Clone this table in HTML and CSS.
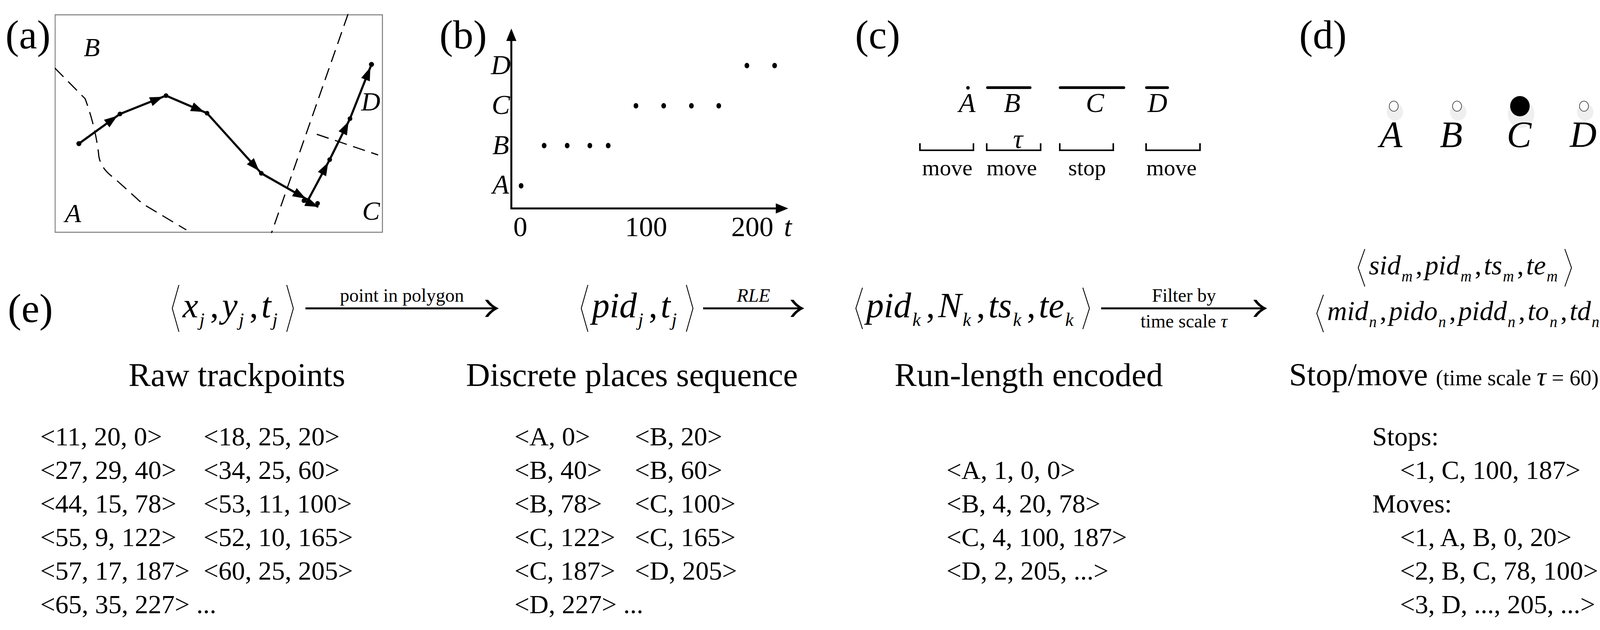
FILE: index.html
```html
<!DOCTYPE html>
<html>
<head>
<meta charset="utf-8">
<title>Trajectory processing figure</title>
<link rel="stylesheet" href="styles.css">
</head>
<body>
<div class="top">
  <div class="panel panel-a">
    <div class="plabel">(a)</div>
    <svg class="fig" width="860" height="640" viewBox="140 0 860 640">
      <defs>
        <marker id="ha" viewBox="0 0 34 24" markerWidth="34" markerHeight="24" refX="42" refY="12" orient="auto" markerUnits="userSpaceOnUse"><path d="M0,0 L34,12 L0,24 Z"/></marker>
        <marker id="hb" viewBox="0 0 34 24" markerWidth="34" markerHeight="24" refX="34" refY="12" orient="auto" markerUnits="userSpaceOnUse"><path d="M0,0 L34,12 L0,24 Z"/></marker>
      </defs>
      <rect class="frame" x="141" y="38" width="838" height="557"/>
      <path class="dash" d="M140,174 L218,253 Q246,330 253,400 Q258,432 292,456 L365,522 L477,589"/>
      <path class="dash" d="M891,36 L695,597"/>
      <path class="dash" d="M811,344 L968,397"/>
      <g class="traj">
        <line x1="202" y1="368" x2="307" y2="292" marker-end="url(#ha)"/>
        <line x1="307" y1="292" x2="425" y2="245" marker-end="url(#ha)"/>
        <line x1="425" y1="245" x2="530" y2="290" marker-end="url(#ha)"/>
        <line x1="530" y1="290" x2="669" y2="444" marker-end="url(#ha)"/>
        <line x1="669" y1="444" x2="790" y2="513" marker-end="url(#ha)"/>
        <line x1="778" y1="514" x2="815" y2="530" marker-end="url(#hb)"/>
        <line x1="790" y1="510" x2="844" y2="409" marker-end="url(#ha)"/>
        <line x1="844" y1="409" x2="896" y2="304" marker-end="url(#ha)"/>
        <line x1="896" y1="304" x2="951" y2="165" marker-end="url(#ha)"/>
      </g>
      <g class="dots">
        <circle cx="202" cy="368" r="6.5"/>
        <circle cx="307" cy="292" r="6"/>
        <circle cx="425" cy="245" r="6"/>
        <circle cx="530" cy="290" r="6"/>
        <circle cx="669" cy="444" r="6"/>
        <circle cx="778" cy="514" r="6"/>
        <circle cx="813" cy="521" r="6"/>
        <circle cx="844" cy="409" r="6"/>
        <circle cx="896" cy="304" r="6"/>
        <circle cx="951" cy="165" r="6.5"/>
      </g>
      <text class="it t68" x="235" y="144" text-anchor="middle">B</text>
      <text class="it t68" x="187" y="569" text-anchor="middle">A</text>
      <text class="it t68" x="949" y="283" text-anchor="middle">D</text>
      <text class="it t68" x="950" y="563" text-anchor="middle">C</text>
    </svg>
  </div>

  <div class="panel panel-b">
    <div class="plabel">(b)</div>
    <svg class="fig" width="820" height="640" viewBox="1255 0 820 640">
      <line class="axis" x1="1309" y1="536" x2="1309" y2="96"/>
      <path d="M1309,73 L1296,105 L1322,105 Z"/>
      <line class="axis" x1="1307" y1="534" x2="1994" y2="534"/>
      <path d="M2018,534 L1986,521 L1986,547 Z"/>
      <text class="it t70" x="1282" y="190" text-anchor="middle">D</text>
      <text class="it t70" x="1282" y="292" text-anchor="middle">C</text>
      <text class="it t70" x="1282" y="395" text-anchor="middle">B</text>
      <text class="it t70" x="1282" y="496" text-anchor="middle">A</text>
      <g class="pts">
        <ellipse cx="1334" cy="476" rx="6" ry="7"/>
        <ellipse cx="1393" cy="373" rx="6" ry="7"/>
        <ellipse cx="1452" cy="373" rx="6" ry="7"/>
        <ellipse cx="1510" cy="373" rx="6" ry="7"/>
        <ellipse cx="1557" cy="373" rx="6" ry="7"/>
        <ellipse cx="1628" cy="271" rx="6" ry="7"/>
        <ellipse cx="1699" cy="271" rx="6" ry="7"/>
        <ellipse cx="1770" cy="271" rx="6" ry="7"/>
        <ellipse cx="1840" cy="271" rx="6" ry="7"/>
        <ellipse cx="1912" cy="168" rx="6" ry="7"/>
        <ellipse cx="1983" cy="168" rx="6" ry="7"/>
      </g>
      <text class="t72" x="1332" y="605" text-anchor="middle">0</text>
      <text class="t72" x="1654" y="605" text-anchor="middle">100</text>
      <text class="t72" x="1926" y="605" text-anchor="middle">200</text>
      <text class="it t72" x="2017" y="605" text-anchor="middle">t</text>
    </svg>
  </div>

  <div class="panel panel-c">
    <div class="plabel">(c)</div>
    <svg class="fig" width="850" height="640" viewBox="2319 0 850 640">
      <circle cx="2478" cy="225" r="4.5"/>
      <g class="bars">
        <line x1="2528" y1="224.5" x2="2637" y2="224.5"/>
        <line x1="2714" y1="224.5" x2="2877" y2="224.5"/>
        <line x1="2935" y1="224.5" x2="2989" y2="224.5"/>
      </g>
      <text class="it t70" x="2476" y="287" text-anchor="middle">A</text>
      <text class="it t70" x="2591" y="287" text-anchor="middle">B</text>
      <text class="it t70" x="2803" y="287" text-anchor="middle">C</text>
      <text class="it t70" x="2963" y="287" text-anchor="middle">D</text>
      <g class="brk">
        <polyline points="2355,367 2355,385 2492,385 2492,367"/>
        <polyline points="2526,367 2526,385 2664,385 2664,367"/>
        <polyline points="2713,367 2713,385 2850,385 2850,367"/>
        <polyline points="2934,367 2934,385 3072,385 3072,367"/>
      </g>
      <text class="it t70" x="2606" y="379" text-anchor="middle">τ</text>
      <text class="t58" x="2425" y="449" text-anchor="middle">move</text>
      <text class="t58" x="2590" y="449" text-anchor="middle">move</text>
      <text class="t58" x="2783" y="449" text-anchor="middle">stop</text>
      <text class="t58" x="2999" y="449" text-anchor="middle">move</text>
    </svg>
  </div>

  <div class="panel panel-d">
    <div class="plabel">(d)</div>
    <svg class="fig" width="836" height="640" viewBox="3456 0 836 640">
      <g class="shadow">
        <ellipse cx="3571" cy="287" rx="21" ry="22"/>
        <ellipse cx="3733" cy="287" rx="21" ry="22"/>
        <ellipse cx="3894" cy="292" rx="34" ry="36"/>
        <ellipse cx="4058" cy="287" rx="21" ry="22"/>
      </g>
      <g class="ring">
        <ellipse cx="3568" cy="272" rx="11.5" ry="13"/>
        <ellipse cx="3730" cy="272" rx="11.5" ry="13"/>
        <ellipse cx="4055" cy="272" rx="11.5" ry="13"/>
      </g>
      <ellipse cx="3891" cy="272" rx="25" ry="26"/>
      <text class="it t95" x="3561" y="377" text-anchor="middle">A</text>
      <text class="it t95" x="3715" y="377" text-anchor="middle">B</text>
      <text class="it t95" x="3889" y="377" text-anchor="middle">C</text>
      <text class="it t95" x="4053" y="377" text-anchor="middle">D</text>
    </svg>
  </div>
</div>

<div class="frow">
  <div class="elabel">(e)</div>

  <div class="fslot s1">
    <span class="fx">
      <svg class="ang" width="22" height="122" viewBox="0 0 22 122"><polyline points="20,1 3,61 20,121"/></svg>
      <span class="fb"><i>x</i><sub>j</sub><span class="cm">,</span><i>y</i><sub>j</sub><span class="cm">,</span><i>t</i><sub>j</sub></span>
      <svg class="ang" width="22" height="122" viewBox="0 0 22 122"><polyline points="2,1 19,61 2,121"/></svg>
    </span>
  </div>

  <div class="arrow a1">
    <div class="alab top">point in polygon</div>
    <svg width="494" height="44" viewBox="0 0 494 44"><line class="ashaft" x1="0" y1="22" x2="486" y2="22"/><path class="ahead" d="M460,0 L467,0 Q478,15 494,22 Q478,29 467,44 L460,44 Q470,28 484,22 Q470,16 460,0 Z"/></svg>
    <div class="alab bot"></div>
  </div>

  <div class="fslot s2">
    <span class="fx">
      <svg class="ang" width="22" height="122" viewBox="0 0 22 122"><polyline points="20,1 3,61 20,121"/></svg>
      <span class="fb"><i>pid</i><sub>j</sub><span class="cm">,</span><i>t</i><sub>j</sub></span>
      <svg class="ang" width="22" height="122" viewBox="0 0 22 122"><polyline points="2,1 19,61 2,121"/></svg>
    </span>
  </div>

  <div class="arrow a2">
    <div class="alab top"><i>RLE</i></div>
    <svg width="258" height="44" viewBox="0 0 258 44"><line class="ashaft" x1="0" y1="22" x2="250" y2="22"/><path class="ahead" d="M224,0 L231,0 Q242,15 258,22 Q242,29 231,44 L224,44 Q234,28 248,22 Q234,16 224,0 Z"/></svg>
    <div class="alab bot"></div>
  </div>

  <div class="fslot s3">
    <span class="fx">
      <svg class="ang" width="22" height="108" viewBox="0 0 22 108"><polyline points="20,1 3,54 20,107"/></svg>
      <span class="fb"><i>pid</i><sub>k</sub><span class="cm">,</span><i>N</i><sub>k</sub><span class="cm">,</span><i>ts</i><sub>k</sub><span class="cm">,</span><i>te</i><sub>k</sub></span>
      <svg class="ang" width="22" height="108" viewBox="0 0 22 108"><polyline points="2,1 19,54 2,107"/></svg>
    </span>
  </div>

  <div class="arrow a3">
    <div class="alab top">Filter by</div>
    <svg width="424" height="44" viewBox="0 0 424 44"><line class="ashaft" x1="0" y1="22" x2="416" y2="22"/><path class="ahead" d="M390,0 L397,0 Q408,15 424,22 Q408,29 397,44 L390,44 Q400,28 414,22 Q400,16 390,0 Z"/></svg>
    <div class="alab bot">time scale <i>τ</i></div>
  </div>

  <div class="fslot s4">
    <div class="f4">
      <span class="fx">
        <svg class="ang" width="22" height="98" viewBox="0 0 22 98"><polyline points="20,1 3,49 20,97"/></svg>
        <span class="fb"><i>sid</i><sub>m</sub><span class="cm">,</span><i>pid</i><sub>m</sub><span class="cm">,</span><i>ts</i><sub>m</sub><span class="cm">,</span><i>te</i><sub>m</sub></span>
        <svg class="ang" width="22" height="98" viewBox="0 0 22 98"><polyline points="2,1 19,49 2,97"/></svg>
      </span>
      <span class="fx">
        <svg class="ang" width="22" height="98" viewBox="0 0 22 98"><polyline points="20,1 3,49 20,97"/></svg>
        <span class="fb"><i>mid</i><sub>n</sub><span class="cm">,</span><i>pido</i><sub>n</sub><span class="cm">,</span><i>pidd</i><sub>n</sub><span class="cm">,</span><i>to</i><sub>n</sub><span class="cm">,</span><i>td</i><sub>n</sub></span>
        <svg class="ang" width="22" height="98" viewBox="0 0 22 98"><polyline points="2,1 19,49 2,97"/></svg>
      </span>
    </div>
  </div>
</div>

<div class="trow">
  <div class="title t1">Raw trackpoints</div>
  <div class="title t2">Discrete places sequence</div>
  <div class="title t3">Run-length encoded</div>
  <div class="title t4">Stop/move <span class="tsub">(time scale <i class="tau">τ</i> = 60)</span></div>
</div>

<div class="lrow">
  <div class="list l1">
    <div>&lt;11, 20, 0&gt;</div><div>&lt;18, 25, 20&gt;</div>
    <div>&lt;27, 29, 40&gt;</div><div>&lt;34, 25, 60&gt;</div>
    <div>&lt;44, 15, 78&gt;</div><div>&lt;53, 11, 100&gt;</div>
    <div>&lt;55, 9, 122&gt;</div><div>&lt;52, 10, 165&gt;</div>
    <div>&lt;57, 17, 187&gt;</div><div>&lt;60, 25, 205&gt;</div>
    <div>&lt;65, 35, 227&gt; ...</div><div></div>
  </div>
  <div class="list l2">
    <div>&lt;A, 0&gt;</div><div>&lt;B, 20&gt;</div>
    <div>&lt;B, 40&gt;</div><div>&lt;B, 60&gt;</div>
    <div>&lt;B, 78&gt;</div><div>&lt;C, 100&gt;</div>
    <div>&lt;C, 122&gt;</div><div>&lt;C, 165&gt;</div>
    <div>&lt;C, 187&gt;</div><div>&lt;D, 205&gt;</div>
    <div>&lt;D, 227&gt; ...</div><div></div>
  </div>
  <div class="list l3">
    <div>&lt;A, 1, 0, 0&gt;</div>
    <div>&lt;B, 4, 20, 78&gt;</div>
    <div>&lt;C, 4, 100, 187&gt;</div>
    <div>&lt;D, 2, 205, ...&gt;</div>
  </div>
  <div class="list l4">
    <div class="hd">Stops:</div>
    <div class="it4">&lt;1, C, 100, 187&gt;</div>
    <div class="hd">Moves:</div>
    <div class="it4">&lt;1, A, B, 0, 20&gt;</div>
    <div class="it4">&lt;2, B, C, 78, 100&gt;</div>
    <div class="it4">&lt;3, D, ..., 205, ...&gt;</div>
  </div>
</div>
</body>
</html>
```

FILE: styles.css
```css
html, body {
  margin: 0;
  padding: 0;
  background: #ffffff;
}
body {
  width: 4292px;
  height: 1614px;
  overflow: hidden;
  font-family: "Liberation Serif", "Times New Roman", serif;
  color: #000;
}

/* ---------- top panels ---------- */
.top {
  display: flex;
  height: 640px;
}
.panel {
  display: flex;
  align-items: flex-start;
  box-sizing: border-box;
  flex: none;
}
.panel-a { width: 1100px; padding-left: 14px; }
.panel-b { width: 1050px; padding-left: 25px; }
.panel-c { width: 1100px; padding-left: 39px; }
.panel-d { width: 1042px; padding-left: 76px; }
.plabel {
  flex: none;
  width: 130px;
  margin-top: 37px;
  font-size: 104px;
  line-height: 104px;
  white-space: nowrap;
}
.panel-a .plabel { width: 126px; }
.fig {
  display: block;
  flex: none;
}
.fig text { font-family: "Liberation Serif", "Times New Roman", serif; fill: #000; }
.fig .it { font-style: italic; }
.t58 { font-size: 58px; }
.t68 { font-size: 68px; }
.t70 { font-size: 70px; }
.t72 { font-size: 72px; }
.t95 { font-size: 95px; }

.frame { fill: none; stroke: #7a7a7a; stroke-width: 2.5; }
.dash { fill: none; stroke: #000; stroke-width: 3; stroke-dasharray: 32 17; }
.traj line { stroke: #000; stroke-width: 5.5; }
.dots circle { fill: #000; }
.axis { stroke: #000; stroke-width: 5; }
.pts ellipse { fill: #000; }
.bars line { stroke: #000; stroke-width: 7; stroke-linecap: round; }
.brk polyline { fill: none; stroke: #000; stroke-width: 4; }
.shadow ellipse { fill: #efefef; }
.ring ellipse { fill: #fff; stroke: #333; stroke-width: 1.6; }

/* ---------- formula row ---------- */
.frow {
  display: flex;
  align-items: center;
  height: 300px;
}
.elabel {
  flex: none;
  margin-left: 20px;
  width: 400px;
  font-size: 104px;
  line-height: 104px;
}
.fslot {
  flex: none;
  display: flex;
  justify-content: center;
  align-items: center;
}
.s1 { width: 352px; }
.s2 { width: 338px; margin-left: 186px; }
.s3 { width: 658px; margin-left: 103px; }
.s4 { width: 894px; margin-left: 60px; }

.fx {
  display: inline-flex;
  align-items: center;
}
.ang { display: block; flex: none; }
.ang polyline { fill: none; stroke: #000; stroke-width: 2.2; }
.fb {
  font-size: 90px;
  line-height: 90px;
  padding: 0 8px;
  white-space: nowrap;
}
.fb i { font-style: italic; }
.fb sub {
  font-size: 48px;
  line-height: 48px;
  font-style: italic;
  vertical-align: -22px;
  margin: 0 14px 0 3px;
}
.cm { margin-right: 8px; }

.f4 {
  display: flex;
  flex-direction: column;
  align-items: center;
  gap: 19px;
  margin-bottom: 91px;
}
.f4 .fb {
  font-size: 70px;
  line-height: 70px;
}
.f4 .fb sub {
  font-size: 39px;
  line-height: 39px;
  vertical-align: -18px;
  margin: 0 8px 0 2px;
}
.f4 .cm { margin-right: 6px; }

.arrow {
  flex: none;
  display: flex;
  flex-direction: column;
  align-items: center;
}
.arrow svg { display: block; }
.a1 { width: 494px; margin-left: 10px; }
.a2 { width: 258px; }
.a3 { width: 424px; }
.ashaft { stroke: #000; stroke-width: 5; }
.ahead { fill: #000; stroke: #000; stroke-width: 1; stroke-linejoin: round; }
.alab {
  height: 46px;
  line-height: 46px;
  font-size: 48px;
  white-space: nowrap;
}
.alab.top { margin-bottom: -12px; }
.alab.bot { margin-top: -12px; }

/* ---------- titles ---------- */
.trow {
  display: flex;
  height: 40px;
  font-size: 85px;
  line-height: 40px;
  white-space: nowrap;
}
.title { flex: none; }
.t1 { margin-left: 329px; width: 864px; }
.t2 { width: 1097px; }
.t3 { width: 1010px; }
.t4 { width: 880px; font-size: 82px; }
.tsub { font-size: 56px; }
.tau { font-style: italic; font-size: 68px; }

/* ---------- lists ---------- */
.lrow {
  display: flex;
  margin-top: 95px;
  font-size: 68px;
  line-height: 86px;
  white-space: nowrap;
}
.list { flex: none; box-sizing: border-box; }
.l1 {
  margin-left: 103px;
  width: 1214px;
  display: grid;
  grid-template-columns: 418px auto;
  align-content: start;
}
.l2 {
  width: 1106px;
  display: grid;
  grid-template-columns: 308px auto;
  align-content: start;
}
.l3 {
  width: 1086px;
  padding-top: 86px;
}
.l4 { width: 783px; }
.l4 .hd { margin-left: 4px; }
.l4 .it4 { margin-left: 75px; }
```
